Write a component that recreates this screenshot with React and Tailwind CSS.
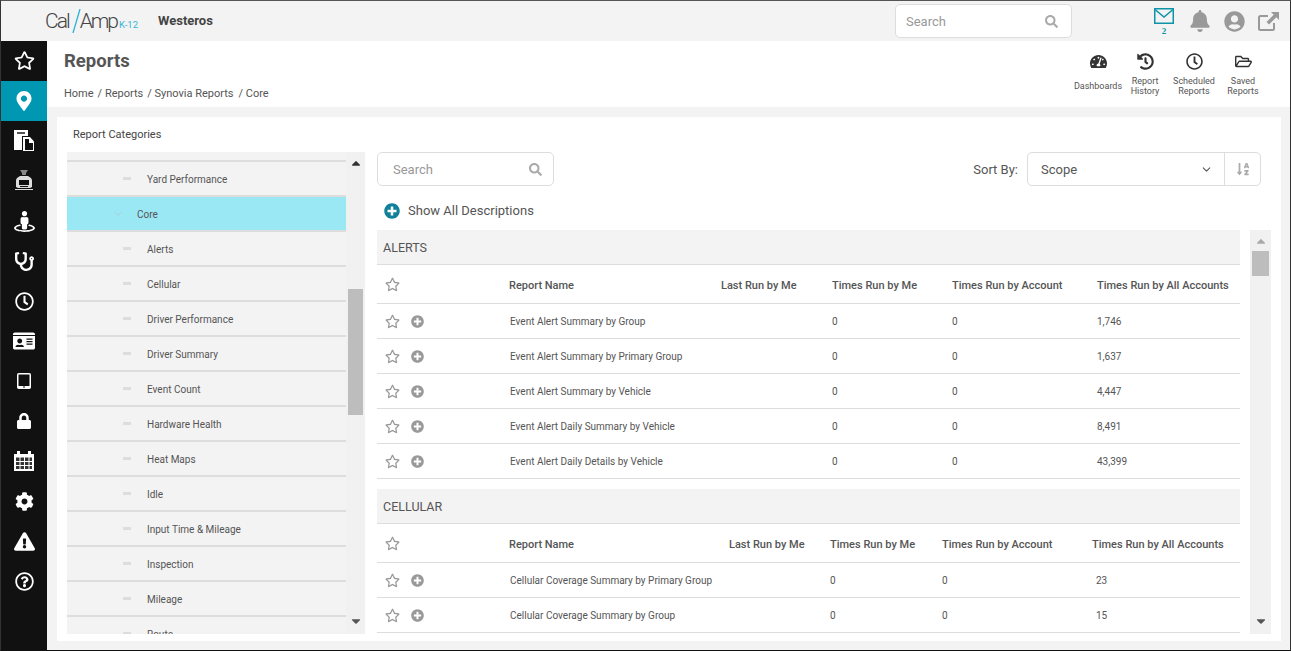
import {
  FaRegStar, FaMapMarkerAlt, FaStreetView, FaStethoscope, FaRegClock, FaIdCard, FaLock,
  FaCog, FaExclamationTriangle, FaRegQuestionCircle, FaBell, FaUserCircle,
  FaTachometerAlt, FaHistory, FaRegFolderOpen, FaPlusCircle, FaSearch, FaSortAlphaDown, FaCaretUp, FaCaretDown,
} from 'react-icons/fa';
import { ChevronDown } from 'lucide-react';

const categories = [
  'Alerts', 'Cellular', 'Driver Performance', 'Driver Summary', 'Event Count', 'Hardware Health',
  'Heat Maps', 'Idle', 'Input Time & Mileage', 'Inspection', 'Mileage', 'Route',
];

const alerts = [
  ['Event Alert Summary by Group', '1,746'],
  ['Event Alert Summary by Primary Group', '1,637'],
  ['Event Alert Summary by Vehicle', '4,447'],
  ['Event Alert Daily Summary by Vehicle', '8,491'],
  ['Event Alert Daily Details by Vehicle', '43,399'],
];

const cellular = [
  ['Cellular Coverage Summary by Primary Group', '23'],
  ['Cellular Coverage Summary by Group', '15'],
];

function FilesIcon() {
  return (
    <svg width="22" height="22" viewBox="0 0 22 22" fill="white">
      <path d="M1 0h14v6H9v14H1z" />
      <path d="M4 2h8v2H4z" fill="#555" />
      <path d="M10 7h7l4 4.5V21H10z" />
      <path d="M12 9h4v4h4v7h-8z" fill="#111" />
    </svg>
  );
}

function BusIcon() {
  return (
    <svg width="22" height="22" viewBox="0 0 22 22" fill="#ddd">
      <path d="M7 0h8l-2 3v2H9V3z" fill="#888" />
      <path d="M7 6h8l3 2 1 2v7l-2 1H5l-2-1v-7l1-2z" />
      <path d="M6 10h10v5H6z" fill="#111" />
      <path d="M7 16h8v1H7z" fill="#111" />
      <path d="M2 19h18v1H2z" />
    </svg>
  );
}

function TabletIcon() {
  return (
    <svg width="14" height="16" viewBox="0 0 14 16" fill="none">
      <rect x=".75" y=".75" width="12.500" height="14.500" rx="1" stroke="white" strokeWidth="1.500" />
      <path d="M1 13h12v2H1z" fill="white" />
      <path d="M6 14h2" stroke="#111" />
    </svg>
  );
}

function CalendarIcon() {
  return (
    <svg width="20" height="20" viewBox="0 0 20 20" fill="white">
      <path d="M0 3h3V0h3v3h8V0h3v3h3v17H0z" />
      <path d="M2 6.500h3.500V10H2zM6.500 6.500H10V10H6.500zM11 6.500h3.500V10H11zM15.500 6.500H18V10h-2.500zM2 11h3.500v3H2zM6.500 11H10v3H6.500zM11 11h3.500v3H11zM15.500 11H18v3h-2.500zM2 15h3.500v3H2zM6.500 15H10v3H6.500zM11 15h3.500v3H11zM15.500 15H18v3h-2.500z" fill="#333" />
    </svg>
  );
}

function ExternalIcon() {
  return (
    <svg width="21" height="19" viewBox="0 0 21 19" fill="none" className="shrink-0">
      <path d="M16 11v5.500a1.500 1.500 0 0 1-1.500 1.500H2.500A1.500 1.500 0 0 1 1 16.500V5.500A1.500 1.500 0 0 1 2.500 4H10" stroke="#999" strokeWidth="2" />
      <path d="M13 0h8v8l-2.700-2.700L11 12.500 8.500 10l7.200-7.300z" fill="#999" />
    </svg>
  );
}

function Logo() {
  return (
    <div className="relative h-[24px] w-[100px] -ml-px flex items-center text-[21px] leading-none font-light tracking-[-2px] text-[#444]">
      <span>Cal</span>
      <svg width="9" height="24" viewBox="0 0 9 24" className="ml-[3px] mr-[-1px] shrink-0"><path d="M8 0 1 24" stroke="#2bb3d3" strokeWidth="1.300" /></svg>
      <span>Amp</span>
      <span className="absolute left-[74px] top-[11px] text-[9.500px] tracking-normal text-[#35b6d6] font-normal">K-12</span>
    </div>
  );
}

function TopBar() {
  return (
    <div className="h-10 shrink-0 bg-[#f3f3f3] flex items-center">
      <div className="ml-[45px] w-[112px]"><Logo /></div>
      <div className="text-[13px] font-bold text-[#444]">Westeros</div>
      <div className="ml-auto w-[177px] h-[34px] mr-[82px] bg-white border border-[#ddd] rounded-[5px] flex items-center px-[10px] justify-between">
        <span className="text-[13px] text-[#999] pt-px">Search</span>
        <FaSearch className="text-[#aaa] text-[13px] mr-[3px]" />
      </div>
      <div className="w-[20px] h-[40px] mr-[15px] flex flex-col items-center">
        <svg width="20" height="16" viewBox="0 0 20 16" fill="none" stroke="#0f93a8" strokeWidth="1.500" className="mt-[7px] shrink-0">
          <rect x=".75" y=".75" width="18.500" height="14.500" />
          <path d="M1 1.500l9 7.500 9-7.500" />
        </svg>
        <span className="text-[9px] leading-none text-[#0f93a8] font-bold font-['Liberation_Serif',serif] mt-[3px]">2</span>
      </div>
      <FaBell className="text-[#999] text-[22px] mr-[13px]" />
      <FaUserCircle className="text-[#999] text-[21px] mr-[13px]" />
      <ExternalIcon />
      <div className="w-[11px] shrink-0" />
    </div>
  );
}

function Sidebar() {
  const items = [
    <FaRegStar className="text-[21px] mb-[2px]" />,
    <FaMapMarkerAlt className="text-[20px]" />,
    <FilesIcon />,
    <BusIcon />,
    <FaStreetView className="text-[21px]" />,
    <FaStethoscope className="text-[19px]" />,
    <FaRegClock className="text-[19px]" />,
    <FaIdCard className="text-[22px]" />,
    <TabletIcon />,
    <FaLock className="text-[16px]" />,
    <CalendarIcon />,
    <FaCog className="text-[19px]" />,
    <FaExclamationTriangle className="text-[21px]" />,
    <FaRegQuestionCircle className="text-[19px]" />,
  ];
  return (
    <div className="w-[46px] shrink-0 bg-[#111] text-white">
      {items.map((icon, i) => (
        <div key={i} className={`h-10 flex items-center justify-center ${i === 1 ? 'bg-[#0097b2]' : ''}`}>{icon}</div>
      ))}
    </div>
  );
}

function HeaderAction({ icon, label, width }) {
  return (
    <div className={`${width} flex flex-col items-center text-center text-[9px] leading-[10px] text-[#555]`}>
      <div className="h-[21px] flex items-center text-[#333] text-[17px] mb-[4px]">{icon}</div>
      <div className="h-[20px] flex items-center whitespace-nowrap">{label}</div>
    </div>
  );
}

function PageHeader() {
  return (
    <div className="h-[66px] shrink-0 bg-white flex justify-between">
      <div className="pl-[17px] pt-[8px]">
        <h1 className="text-[18.500px] leading-[24px] font-bold text-[#555]">Reports</h1>
        <div className="mt-[13px] text-[11px] leading-[16px] text-[#555] flex gap-[4px]">
          <span>Home</span><span>/ Reports</span><span>/ Synovia Reports</span><span className="ml-px">/ Core</span>
        </div>
      </div>
      <div className="flex items-start pt-[10px] pr-[24px]">
        <HeaderAction icon={<FaTachometerAlt />} label="Dashboards" width="w-[48px]" />
        <HeaderAction icon={<FaHistory />} label={<span>Report<br />History</span>} width="w-[46px]" />
        <HeaderAction icon={<FaRegClock />} label={<span>Scheduled<br />Reports</span>} width="w-[52px]" />
        <HeaderAction icon={<FaRegFolderOpen />} label={<span>Saved<br />Reports</span>} width="w-[46px]" />
      </div>
    </div>
  );
}

function CategoryRow({ label }) {
  return (
    <div className="h-[35px] shrink-0 bg-[#f3f3f3] border-b-2 border-[#ddd] flex items-center text-[10px] text-[#555]">
      <span className="ml-[56px] mr-[16px] w-[8px] h-[3px] bg-[#ddd]" />
      <span className="pt-[2px]">{label}</span>
    </div>
  );
}

function Scrollbar({ thumbTop, thumbHeight, dark, width }) {
  return (
    <div className={`${width} shrink-0 bg-[#f1f1f1] relative flex flex-col items-center justify-between pt-[4px] pb-[6px] text-[#555]`}>
      <FaCaretUp className={`text-[14px] ${dark ? 'text-[#333]' : 'text-[#aaa]'}`} />
      <div className="absolute left-[2px] right-[2px] bg-[#bdbdbd]" style={{ top: thumbTop, height: thumbHeight }} />
      <FaCaretDown className="text-[14px]" />
    </div>
  );
}

function CategoryList() {
  return (
    <div className="w-[298px] shrink-0 flex h-[482px]">
      <div className="flex-1 overflow-hidden flex flex-col bg-[#f3f3f3]">
        <div className="h-[10px] shrink-0 border-b-2 border-[#ddd]" />
        <CategoryRow label="Yard Performance" />
        <div className="h-[35px] shrink-0 bg-[#9be8f5] border-b-2 border-[#ddd] flex items-center text-[10px] text-[#555]">
          <ChevronDown size={12} className="ml-[45px] mr-[13px] text-[#aacdd4]" />
          <span className="pt-[2px]">Core</span>
        </div>
        {categories.map((c) => <CategoryRow key={c} label={c} />)}
      </div>
      <Scrollbar width="w-[19px]" dark thumbTop={137} thumbHeight={126} />
    </div>
  );
}

function ReportSection({ title, allClass, rows, headers, cols }) {
  return (
    <div className="mb-[10px] shrink-0">
      <div className="h-[35px] bg-[#f3f3f3] border-b border-[#ddd] flex items-center pl-[6px] pt-[2px] text-[12.500px] text-[#555]">{title}</div>
      <div className={`grid ${cols} h-[39px] items-center border-b border-[#ddd] text-[11px] font-medium text-[#555]`}>
        <div className="pl-[8px] text-[15px] text-[#999]"><FaRegStar /></div>
        {headers.map((h) => <div key={h} className="pt-[5px]">{h}</div>)}
      </div>
      {rows.map(([name, all]) => (
        <div key={name} className={`grid ${cols} h-[35px] items-center border-b border-[#ddd] text-[10px] text-[#555]`}>
          <div className="pl-[8px] flex items-center gap-[11px] text-[#999]">
            <FaRegStar className="text-[15px]" />
            <FaPlusCircle className="text-[13px]" />
          </div>
          <div className="pl-px whitespace-nowrap">{name}</div>
          <div />
          <div>0</div>
          <div>0</div>
          <div className={allClass}>{all}</div>
        </div>
      ))}
    </div>
  );
}

function ReportsPanel() {
  const headers = ['Report Name', 'Last Run by Me', 'Times Run by Me', 'Times Run by Account', 'Times Run by All Accounts'];
  return (
    <div className="flex-1 ml-[12px] min-w-0 flex flex-col h-[482px]">
      <div className="h-[34px] shrink-0 flex items-center justify-between mr-[10px]">
        <div className="w-[177px] h-[34px] bg-white border border-[#ddd] rounded-[5px] flex items-center justify-between pl-[15px] pr-[11px]">
          <span className="text-[13px] text-[#999] pt-[2px]">Search</span>
          <FaSearch className="text-[13px] text-[#aaa]" />
        </div>
        <div className="flex items-center">
          <span className="text-[13px] text-[#555] mr-[9px] pt-[2px]">Sort By:</span>
          <div className="w-[234px] h-[34px] bg-white border border-[#ddd] rounded-[5px] flex items-center text-[13px] text-[#555]">
            <span className="pl-[13px] flex-1 pt-[2px]">Scope</span>
            <ChevronDown size={13} className="mr-[11px] text-[#555]" />
            <div className="w-[36px] h-full border-l border-[#ddd] flex items-center justify-center text-[#aaa] text-[14px]"><FaSortAlphaDown /></div>
          </div>
        </div>
      </div>
      <div className="h-[44px] shrink-0 flex items-center pl-[7px] pt-[6px]">
        <FaPlusCircle className="text-[16px] text-[#0f8299]" />
        <span className="ml-[8px] text-[13px] text-[#555]">Show All Descriptions</span>
      </div>
      <div className="flex-1 min-h-0 flex">
        <div className="w-[863px] overflow-hidden flex flex-col">
          <ReportSection title="ALERTS" headers={headers} rows={alerts} cols="grid-cols-[132px_212px_111px_120px_145px_1fr]" />
          <ReportSection title="CELLULAR" headers={headers} rows={cellular} allClass="pl-[4px]" cols="grid-cols-[132px_220px_101px_112px_150px_1fr]" />
        </div>
        <div className="ml-[10px] h-full flex">
          <Scrollbar width="w-[21px]" thumbTop={21} thumbHeight={25} />
        </div>
      </div>
    </div>
  );
}

export default function App() {
  return (
    <div className="w-[1291px] h-[651px] overflow-hidden border-t border-x border-b border-t-[#555] border-x-[#333] border-b-[#111] bg-[#f3f3f3] flex flex-col font-['Roboto',sans-serif]">
      <TopBar />
      <div className="flex-1 min-h-0 flex">
        <Sidebar />
        <div className="flex-1 min-w-0 flex flex-col">
          <PageHeader />
          <div className="flex-1 min-h-0 pl-[10px] pr-[9px] pt-[10px]">
            <div className="h-[524px] bg-white flex flex-col px-[10px]">
              <div className="h-[35px] shrink-0 flex items-center pl-[6px] pt-[2px] text-[11px] text-[#444]">Report Categories</div>
              <div className="flex">
                <CategoryList />
                <ReportsPanel />
              </div>
            </div>
          </div>
        </div>
      </div>
    </div>
  );
}
